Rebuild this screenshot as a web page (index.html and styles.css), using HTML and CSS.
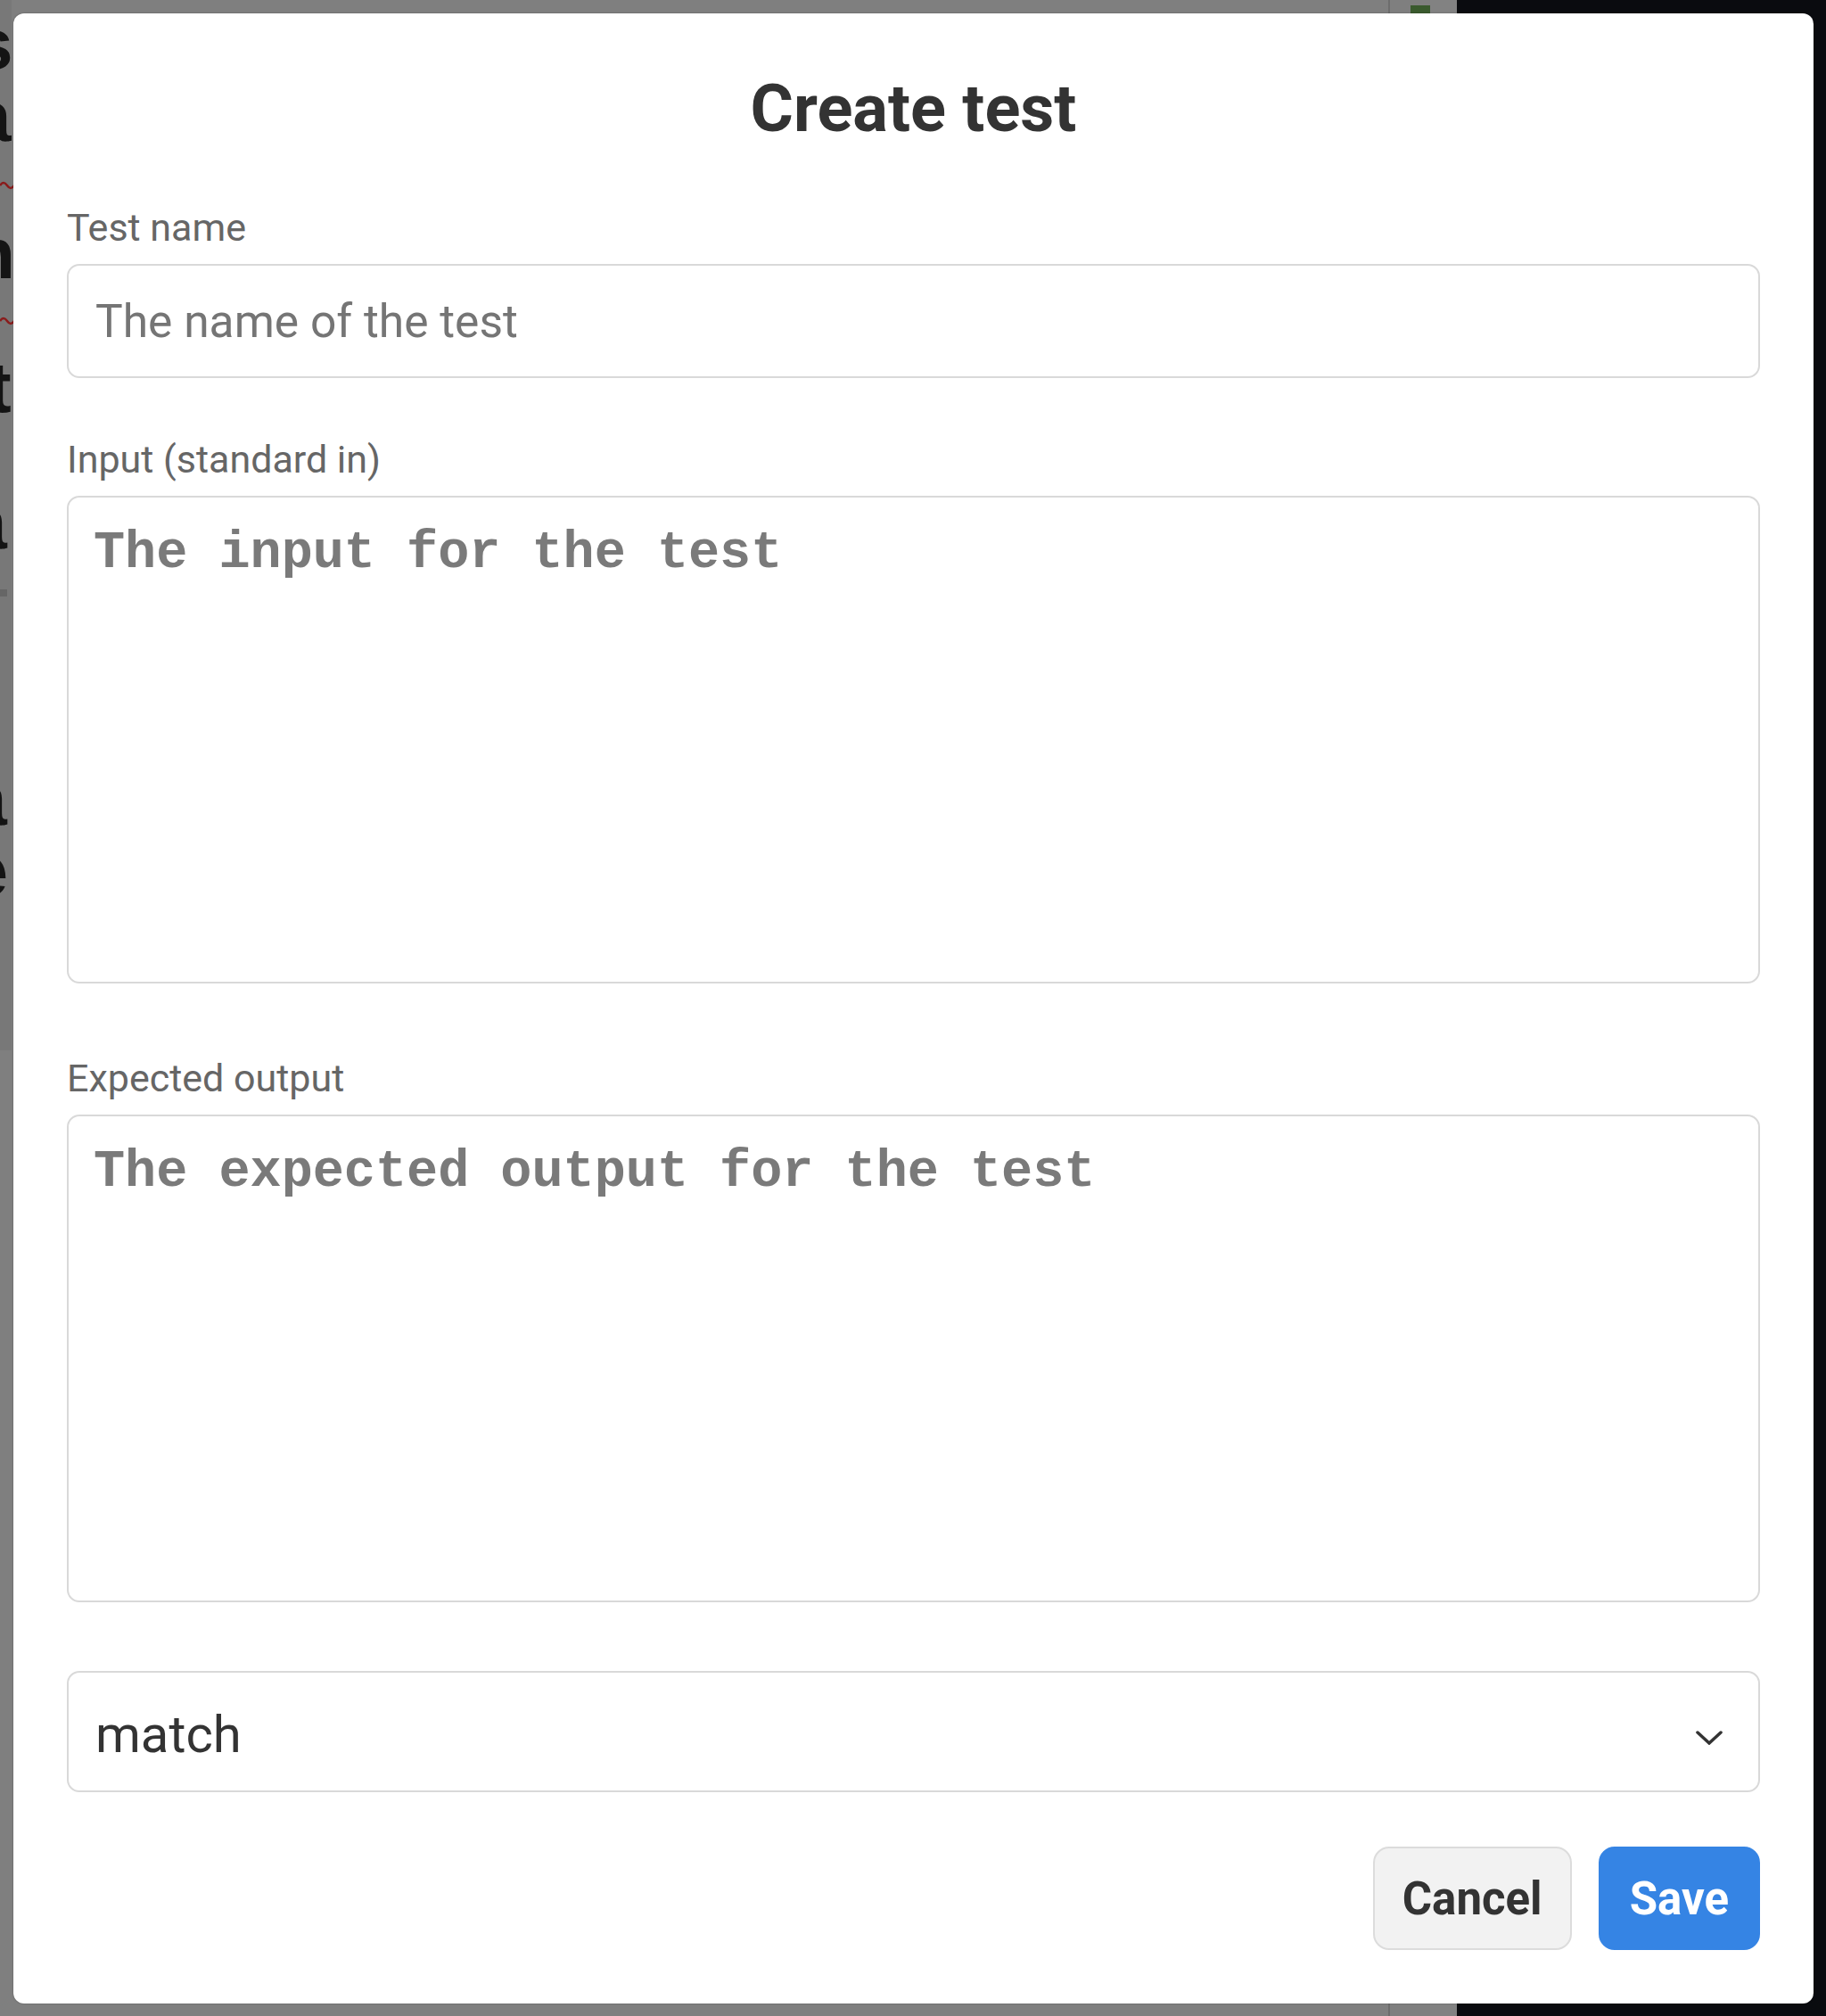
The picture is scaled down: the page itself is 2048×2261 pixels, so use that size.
FILE: index.html
```html
<!DOCTYPE html>
<html lang="en">
<head>
<meta charset="utf-8">
<title>Create test</title>
<link rel="stylesheet" href="styles.css">
</head>
<body>
<svg class="backdrop" width="2048" height="2261" viewBox="0 0 2048 2261" aria-hidden="true">
  <rect class="bd-page" x="0" y="0" width="2048" height="2261"/>
  <rect class="bd-shade" x="0" y="0" width="13" height="1178"/>
  <rect class="bd-rule" x="1557" y="0" width="2" height="2261"/>
  <rect class="bd-rail" x="1604" y="0" width="30" height="2261"/>
  <rect class="bd-dark" x="1634" y="0" width="414" height="2261"/>
  <rect class="bd-tab" x="1582" y="6" width="22" height="9"/>
  <text class="ghost-sans" x="-30" y="77">s</text>
  <text class="ghost-sans" x="-32" y="158">a</text>
  <path class="ghost-err" d="M0 208 q4 -6 8 0 t8 0"/>
  <text class="ghost-sans" x="-32" y="312">n</text>
  <path class="ghost-err" d="M0 360 q4 -6 8 0 t8 0"/>
  <text class="ghost-sans" x="-14" y="462">t</text>
  <text class="ghost-mono" x="-40" y="615">a</text>
  <rect class="ghost-box" x="0" y="661" width="8" height="8"/>
  <text class="ghost-mono" x="-40" y="925">a</text>
  <text class="ghost-mono" x="-40" y="1005">e</text>
</svg>

<div class="modal" role="dialog" aria-labelledby="dlg-title">
  <h2 class="modal-title" id="dlg-title">Create test</h2>

  <div class="field field-name">
    <label class="field-label" for="test-name">Test name</label>
    <input class="text-input" id="test-name" type="text" placeholder="The name of the test">
  </div>

  <div class="field field-input">
    <label class="field-label" for="test-input">Input (standard in)</label>
    <textarea class="code-area" id="test-input" placeholder="The input for the test"></textarea>
  </div>

  <div class="field field-output">
    <label class="field-label" for="test-output">Expected output</label>
    <textarea class="code-area" id="test-output" placeholder="The expected output for the test"></textarea>
  </div>

  <div class="select-box" role="combobox" aria-expanded="false">
    <span class="select-value">match</span>
    <svg class="chevron" width="30" height="16" viewBox="0 0 30 16" aria-hidden="true">
      <polyline points="2,2 15,14 28,2"/>
    </svg>
  </div>

  <div class="actions">
    <button class="btn btn-cancel" type="button">Cancel</button>
    <button class="btn btn-save" type="button">Save</button>
  </div>
</div>
</body>
</html>
```

FILE: styles.css
```css
* {
  box-sizing: border-box;
}

html,
body {
  margin: 0;
  padding: 0;
}

body {
  position: relative;
  width: 2048px;
  height: 2261px;
  overflow: hidden;
  background: #7f7f7f;
  font-family: Roboto, "Liberation Sans", sans-serif;
}

/* ---------- obscured page behind the dialog ---------- */
.backdrop {
  position: absolute;
  left: 0;
  top: 0;
  display: block;
}

.bd-page { fill: #7f7f7f; }
.bd-shade { fill: #787878; }
.bd-rule { fill: #6d6d6d; }
.bd-rail { fill: #828282; }
.bd-dark { fill: #0a0b0f; }
.bd-tab { fill: #3a5a2e; }

.ghost-sans {
  font-family: "Liberation Sans", sans-serif;
  font-weight: 700;
  font-size: 80px;
  fill: #141414;
}

.ghost-mono {
  font-family: "Liberation Mono", monospace;
  font-weight: 700;
  font-size: 84px;
  fill: #141414;
}

.ghost-err {
  fill: none;
  stroke: #8a1c1c;
  stroke-width: 2.5;
}

.ghost-box { fill: #666666; }

/* ---------- dialog ---------- */
.modal {
  position: absolute;
  left: 15px;
  top: 15px;
  width: 2019px;
  height: 2232px;
  background: #ffffff;
  border-radius: 12px;
  box-shadow: 0 0 2px rgba(0, 0, 0, 0.35);
  padding: 64px 60px 60px;
  display: flex;
  flex-direction: column;
}

.modal-title {
  margin: 0;
  font-size: 74px;
  line-height: 86px;
  font-weight: 700;
  color: #333333;
  text-align: center;
}

.field {
  display: flex;
  flex-direction: column;
  gap: 16px;
}

.field-name { margin-top: 65px; }
.field-input { margin-top: 66px; }
.field-output { margin-top: 81px; }

.field-label {
  font-size: 43px;
  line-height: 50px;
  color: #666666;
}

.text-input {
  display: block;
  width: 100%;
  height: 128px;
  margin: 0;
  padding: 0 30px;
  border: 2px solid #d9d9d9;
  border-radius: 14px;
  background: #ffffff;
  font-family: Roboto, "Liberation Sans", sans-serif;
  font-size: 51.5px;
  color: #333333;
  outline: none;
}

.text-input::placeholder {
  color: #757575;
  opacity: 1;
}

.code-area {
  display: block;
  width: 100%;
  height: 547px;
  margin: 0;
  padding: 28px 28px;
  border: 2px solid #d9d9d9;
  border-radius: 14px;
  background: #ffffff;
  font-family: "Liberation Mono", "DejaVu Sans Mono", monospace;
  font-size: 58.5px;
  font-weight: 700;
  line-height: 70px;
  color: #333333;
  resize: none;
  outline: none;
}

.code-area::placeholder {
  color: #7a7a7a;
  opacity: 1;
}

.select-box {
  margin-top: 77px;
  height: 136px;
  border: 2px solid #d9d9d9;
  border-radius: 14px;
  background: #ffffff;
  padding: 0 40px 0 30px;
  display: flex;
  align-items: center;
  justify-content: space-between;
}

.select-value {
  font-size: 58px;
  line-height: 67px;
  padding-top: 7px;
  color: #333333;
}

.chevron {
  display: block;
  margin-top: 14px;
}

.chevron polyline {
  fill: none;
  stroke: #333333;
  stroke-width: 3.5;
  stroke-linejoin: miter;
  stroke-linecap: round;
}

.actions {
  margin-top: 61px;
  display: flex;
  justify-content: flex-end;
  gap: 30px;
}

.btn {
  height: 116px;
  margin: 0;
  padding: 0 31px;
  border-radius: 18px;
  border: 2px solid transparent;
  font-family: Roboto, "Liberation Sans", sans-serif;
  font-size: 51px;
  font-weight: 700;
  line-height: 1;
  cursor: pointer;
}

.btn-cancel {
  background: #f2f2f2;
  border-color: #dcdcdc;
  color: #333333;
}

.btn-save {
  padding: 0 33px;
  background: #3584e4;
  border-color: #3584e4;
  color: #ffffff;
}
```
